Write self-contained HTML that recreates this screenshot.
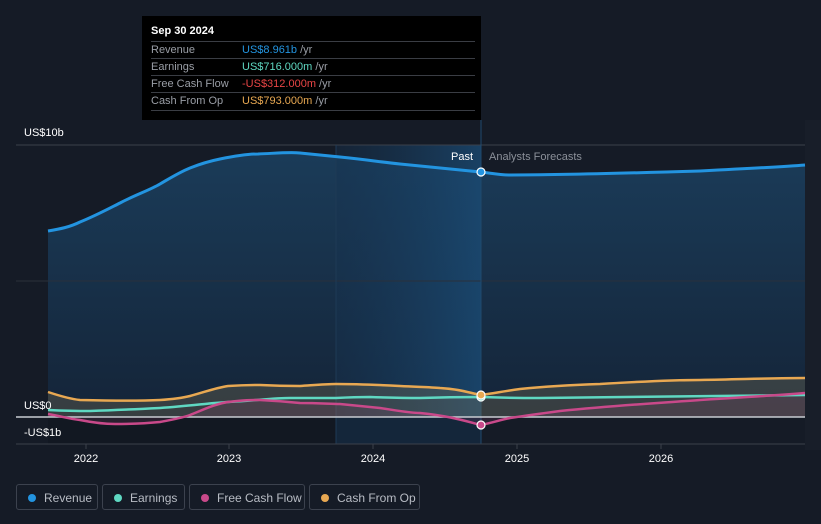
<!DOCTYPE html>
<html><head><meta charset="utf-8"><style>
body{margin:0;background:#151b26;font-family:"Liberation Sans",sans-serif;}
.wrap{position:relative;width:821px;height:524px;overflow:hidden;background:#151b26;}
.tt{position:absolute;left:142px;top:16px;width:339px;height:104px;background:#000;color:#fff;font-size:11px;}
.tt .h{position:absolute;left:9px;top:9px;font-weight:bold;font-size:11px}
.tt .r{position:absolute;left:9px;width:324px;height:17px;border-top:1px solid #3a3d44;line-height:17px;color:#9a9ea6}
.tt .r span{position:absolute;left:91px}
.leg{position:absolute;top:484px;height:26px;border:1px solid #3c424e;border-radius:3px;color:#b8bcc4;font-size:12px;line-height:26px;box-sizing:border-box}
.leg i{position:absolute;left:11px;top:9px;width:8px;height:8px;border-radius:50%}
.leg span{position:absolute;left:27px}
</style></head><body><div class="wrap">
<svg width="821" height="524" style="position:absolute;left:0;top:0">
<defs>
<linearGradient id="g1" x1="0" y1="0" x2="0" y2="1"><stop offset="0" stop-color="#1b3f5e"/><stop offset="1" stop-color="#14253a"/></linearGradient>
<linearGradient id="g2" x1="0" y1="0" x2="1" y2="0"><stop offset="0" stop-color="#16324f" stop-opacity="0.4"/><stop offset="1" stop-color="#1a4a73" stop-opacity="0.8"/></linearGradient>
</defs>
<rect x="805" y="120" width="16" height="330" fill="#181e29"/>
<path d="M48,231 C60,229 70,227 80,222 C95,216 110,208 120,203 C135,195 150,190 160,184 C172,177 180,172 190,168 C205,162 215,160 220,159 C240,155 250,154 258,154 C280,153 290,152 300,153 C320,155 330,156 340,157 C370,160 380,162 400,164 C440,168 460,170 481,172 C490,173 500,175 510,175 C550,175 600,174 700,171 C740,169 780,167 805,165 L805,417 L48,417 Z" fill="url(#g1)" opacity="0.9"/>
<rect x="336" y="145" width="145" height="272" fill="url(#g2)"/>
<rect x="48" y="417" width="433" height="27" fill="#121822"/>
<rect x="336" y="417" width="145" height="27" fill="#14263a"/>
<line x1="16" y1="145" x2="805" y2="145" stroke="#3b404b"/>
<line x1="16" y1="281" x2="805" y2="281" stroke="#2a303b"/>
<line x1="481" y1="120" x2="481" y2="444" stroke="#1f4a6e"/>
<line x1="336" y1="145" x2="336" y2="444" stroke="#1e3a55"/>
<path d="M48,392 C60,396 70,399 80,400 C120,401 140,401 160,400 C175,399 182,398 190,396 C205,392 215,388 228,386 C245,385 255,385 260,385 C280,386 290,386 300,386 C315,385 325,384 336,384 C360,384 380,385 400,386 C420,387 430,387 440,388 C460,389 470,393 481,395 C495,393 505,391 520,389 C550,386 570,385 600,384 C650,381 680,380 700,380 C750,379 780,378 805,378 L805,417 L48,417 Z" fill="#a08a5a" opacity="0.25"/>
<path d="M48,414 C60,416 70,419 80,420 C95,423 105,424 115,424 C135,424 150,423 160,422 C175,419 182,418 190,415 C205,409 215,404 228,402 C245,400 250,400 260,400 C280,401 290,402 300,403 C320,403 330,404 340,404 C360,406 370,407 380,408 C400,411 410,413 420,413 C450,416 465,421 481,425 C495,422 500,420 510,418 C530,415 545,413 560,411 C620,405 660,403 700,400 C750,397 780,395 805,393 L805,417 L48,417 Z" fill="#b0507f" opacity="0.15"/>
<line x1="16" y1="417" x2="805" y2="417" stroke="#c8ccd2" stroke-width="1.5"/>
<line x1="16" y1="444" x2="805" y2="444" stroke="#3b404b"/>
<g stroke="#3b404b"><line x1="86" y1="444" x2="86" y2="449"/><line x1="229" y1="444" x2="229" y2="449"/><line x1="373" y1="444" x2="373" y2="449"/><line x1="517" y1="444" x2="517" y2="449"/><line x1="661" y1="444" x2="661" y2="449"/></g>
<g fill="none" stroke-width="2.5">
<path d="M48,410 C70,411 80,411 90,411 C120,410 140,409 160,408 C190,406 210,403 228,402 C260,400 275,398 290,398 C310,398 325,398 336,398 C355,397 362,397 370,397 C400,398 410,398 420,398 C450,397 470,397 481,397 C510,398 530,398 540,398 C650,397 750,396 805,395" stroke="#5fd8c2"/>
<path d="M48,414 C60,416 70,419 80,420 C95,423 105,424 115,424 C135,424 150,423 160,422 C175,419 182,418 190,415 C205,409 215,404 228,402 C245,400 250,400 260,400 C280,401 290,402 300,403 C320,403 330,404 340,404 C360,406 370,407 380,408 C400,411 410,413 420,413 C450,416 465,421 481,425 C495,422 500,420 510,418 C530,415 545,413 560,411 C620,405 660,403 700,400 C750,397 780,395 805,393" stroke="#c9498a"/>
<path d="M48,392 C60,396 70,399 80,400 C120,401 140,401 160,400 C175,399 182,398 190,396 C205,392 215,388 228,386 C245,385 255,385 260,385 C280,386 290,386 300,386 C315,385 325,384 336,384 C360,384 380,385 400,386 C420,387 430,387 440,388 C460,389 470,393 481,395 C495,393 505,391 520,389 C550,386 570,385 600,384 C650,381 680,380 700,380 C750,379 780,378 805,378" stroke="#e8a852"/>
<path d="M48,231 C60,229 70,227 80,222 C95,216 110,208 120,203 C135,195 150,190 160,184 C172,177 180,172 190,168 C205,162 215,160 220,159 C240,155 250,154 258,154 C280,153 290,152 300,153 C320,155 330,156 340,157 C370,160 380,162 400,164 C440,168 460,170 481,172 C490,173 500,175 510,175 C550,175 600,174 700,171 C740,169 780,167 805,165" stroke="#2394e0" stroke-width="3"/>
</g>
<g stroke="#fff" stroke-width="1.2">
<circle cx="481" cy="172" r="4" fill="#2394e0"/>
<circle cx="481" cy="397" r="4" fill="#5fd8c2"/>
<circle cx="481" cy="395" r="4" fill="#e8a852"/>
<circle cx="481" cy="425" r="4" fill="#c9498a"/>
</g>
<g font-size="11" fill="#fff">
<text x="24" y="136">US$10b</text>
<text x="24" y="409">US$0</text>
<text x="24" y="436">-US$1b</text>
<text x="473" y="160" text-anchor="end">Past</text>
<text x="489" y="160" fill="#8b9099">Analysts Forecasts</text>
<g text-anchor="middle"><text x="86" y="462">2022</text><text x="229" y="462">2023</text><text x="373" y="462">2024</text><text x="517" y="462">2025</text><text x="661" y="462">2026</text></g>
</g>
</svg>
<div class="tt">
<div class="h">Sep 30 2024</div>
<div class="r" style="top:25px">Revenue<span style="color:#2394e0">US$8.961b <b style="font-weight:normal;color:#9a9ea6">/yr</b></span></div>
<div class="r" style="top:42px">Earnings<span style="color:#5fd8c2">US$716.000m <b style="font-weight:normal;color:#9a9ea6">/yr</b></span></div>
<div class="r" style="top:59px">Free Cash Flow<span style="color:#e84545">-US$312.000m <b style="font-weight:normal;color:#9a9ea6">/yr</b></span></div>
<div class="r" style="top:76px;border-bottom:1px solid #3a3d44">Cash From Op<span style="color:#e8a852">US$793.000m <b style="font-weight:normal;color:#9a9ea6">/yr</b></span></div>
</div>
<div class="leg" style="left:16px;width:82px"><i style="background:#2394e0"></i><span>Revenue</span></div>
<div class="leg" style="left:102px;width:83px"><i style="background:#5fd8c2"></i><span>Earnings</span></div>
<div class="leg" style="left:189px;width:116px"><i style="background:#c9498a"></i><span>Free Cash Flow</span></div>
<div class="leg" style="left:309px;width:111px"><i style="background:#e8a852"></i><span>Cash From Op</span></div>
</div></body></html>
